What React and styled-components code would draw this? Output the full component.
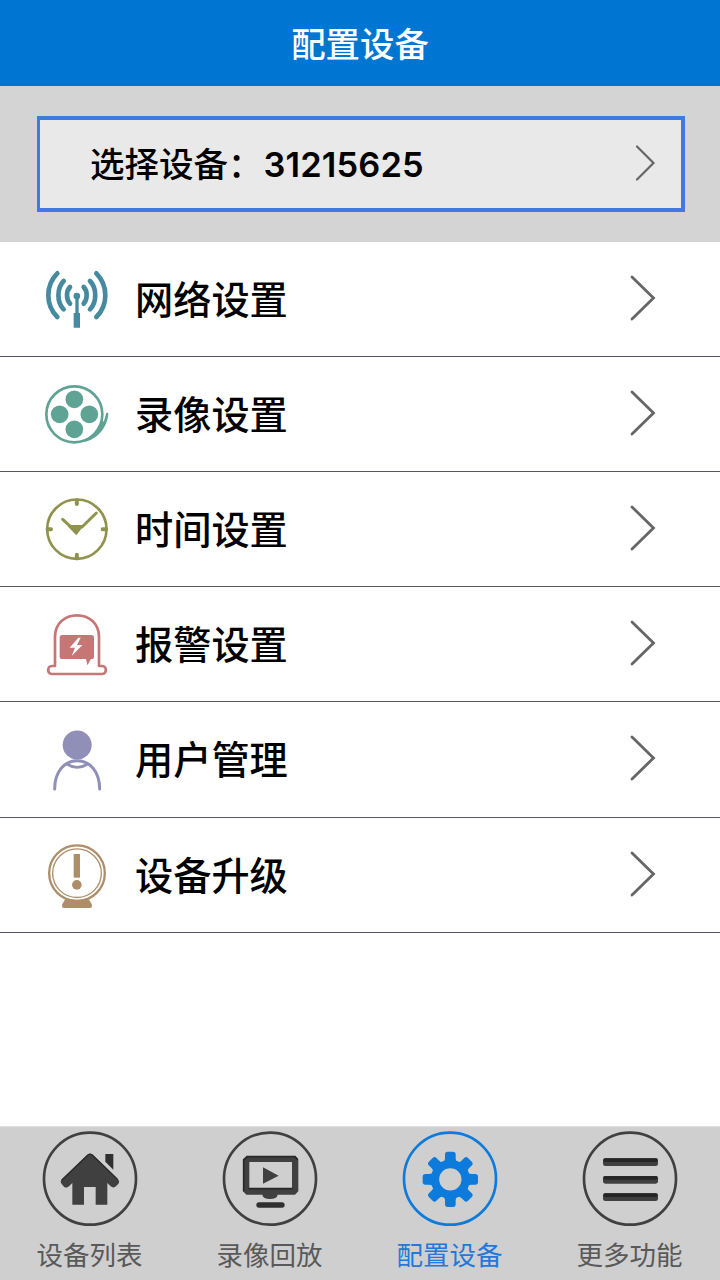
import React, { Fragment } from 'react';
import styled, { createGlobalStyle } from 'styled-components';

const GlobalStyle = createGlobalStyle`
  body {
    margin: 0;
    background: #ffffff;
    font-family: "Noto Sans CJK SC", sans-serif;
  }
`;

const Page = styled.div`
  display: flex;
  flex-direction: column;
  width: 720px;
  height: 1280px;
  overflow: hidden;
`;

const Header = styled.header`
  display: flex;
  align-items: center;
  justify-content: center;
  box-sizing: border-box;
  height: 86px;
  flex-shrink: 0;
  padding-bottom: 2px;
  background: #0076d3;
  color: #ffffff;
`;

const HeaderTitle = styled.h1`
  margin: 0;
  font-size: 34.4px;
  font-weight: 500;
  line-height: 50px;
`;

const DevicePanel = styled.section`
  box-sizing: border-box;
  height: 155.6px;
  flex-shrink: 0;
  padding: 30px 35px 0 37px;
  background: #d4d4d4;
`;

const DeviceButton = styled.button`
  display: flex;
  align-items: center;
  justify-content: space-between;
  box-sizing: border-box;
  width: 100%;
  height: 96px;
  padding: 0 25px 2px 50px;
  border: 4px solid #4079e2;
  border-left-width: 3px;
  background: #e9e9e9;
  color: #000000;
  font: 500 34.5px/50px "Noto Sans CJK SC", sans-serif;
`;

const DeviceNumber = styled.span`
  margin-left: 1px;
  font-family: Inter, sans-serif;
  font-size: 34.4px;
  font-weight: 600;
  letter-spacing: 0.15px;
`;

const MenuList = styled.ul`
  margin: 0;
  padding: 0;
  flex: 1;
  list-style: none;
`;

const MenuItem = styled.li`
  display: flex;
  align-items: center;
  box-sizing: border-box;
  height: 115.2px;
  padding: 0 63px 2px 40px;
  border-bottom: 1px solid #555a60;
`;

const MenuIcon = styled.svg`
  width: 72px;
  height: 72px;
  flex-shrink: 0;
  color: ${({ $color }) => $color};
`;

const MenuLabel = styled.span`
  flex: 1;
  margin-left: 23px;
  color: #000000;
  font-size: 38.2px;
  font-weight: 500;
  line-height: 56px;
`;

const Chevron = styled.svg`
  width: ${({ $width }) => $width}px;
  height: ${({ $height }) => $height}px;
  fill: none;
  stroke: #666666;
  stroke-width: ${({ $stroke }) => $stroke};
  stroke-linecap: round;
`;

const TabBar = styled.nav`
  display: grid;
  grid-template-columns: repeat(4, 180px);
  box-sizing: border-box;
  height: 154px;
  flex-shrink: 0;
  border-top: 1px solid #dedede;
  background: #cfcfcf;
`;

const Tab = styled.div`
  display: flex;
  flex-direction: column;
  align-items: center;
  padding-top: 2px;
  color: ${({ $active }) => ($active ? '#2478dc' : '#595959')};
`;

const TabIcon = styled.svg`
  width: 100px;
  height: 100px;
  flex-shrink: 0;
  color: ${({ $active }) => ($active ? '#0c7bdc' : '#404040')};
`;

const TabLabel = styled.span`
  margin-top: 5px;
  padding-right: 1px;
  font-size: 26.5px;
  line-height: 40px;
`;

const NetworkIcon = () => (
  <Fragment>
    <g fill="none" stroke="currentColor" strokeWidth="14" strokeLinecap="round">
      <path d="M82 55C46 91 46 150 82 186" />
      <path d="M101 78C80 99 80 142 101 163" />
      <path d="M120 96C108 108 108 133 120 146" />
      <path d="M199 55C235 91 235 150 199 186" />
      <path d="M180 78C201 99 201 142 180 163" />
      <path d="M161 96C173 108 173 133 161 146" />
    </g>
    <circle cx="140.500" cy="123" r="10" fill="currentColor" />
    <path d="M136 128h10v46h4v44h-19v-44h5z" fill="currentColor" />
  </Fragment>
);

const RecordIcon = () => (
  <Fragment>
    <circle cx="133" cy="133" r="84" fill="none" stroke="currentColor" strokeWidth="8" />
    <path
      d="M228 132Q228 128 231.500 128Q235 128 235 132C232 170 205 206 166 215L150 216C187 204 217 180 228 132z"
      fill="currentColor"
    />
    <path d="M217 150C208 180 190 202 150 216L184 208C203 194 213 178 221 156z" fill="currentColor" />
    <circle cx="133" cy="88" r="26.500" fill="currentColor" />
    <circle cx="133" cy="178" r="26.500" fill="currentColor" />
    <circle cx="89" cy="133" r="26.500" fill="currentColor" />
    <circle cx="178" cy="133" r="26.500" fill="currentColor" />
  </Fragment>
);

const TimeIcon = () => (
  <Fragment>
    <circle cx="140.500" cy="132.500" r="89" fill="none" stroke="currentColor" strokeWidth="8" />
    <g fill="none" stroke="currentColor" strokeLinecap="round">
      <path d="M140.500 46v11M140.500 209v11M53 133h10M218 133h10" strokeWidth="12" />
      <path d="M98 103L125 128M156 126L199 84" strokeWidth="9" />
    </g>
    <path d="M118 120H163L139 151L114 125z" fill="currentColor" />
  </Fragment>
);

const AlarmIcon = () => (
  <Fragment>
    <path
      d="M75 198V110C75 70 105 46 141 46S207 70 207 110V198H217C231 198 231 222 217 222H65C51 222 51 198 65 198z"
      fill="none"
      stroke="currentColor"
      strokeWidth="8"
      strokeLinejoin="round"
    />
    <path d="M97 105H184Q192 105 192 113V170Q192 177 184 177H183L172 196L168 177H97Q89 177 89 170V113Q89 105 97 105z" fill="currentColor" />
    <path d="M145 113L119 143H135L125 168L157 135H141L152 113z" fill="#ffffff" />
  </Fragment>
);

const UserIcon = () => (
  <Fragment>
    <circle cx="141.500" cy="90" r="43.500" fill="currentColor" />
    <path d="M74 222C74 170 103 137 141.500 137S209 170 209 222" fill="none" stroke="currentColor" strokeWidth="9" strokeLinecap="round" />
    <path d="M110 147Q141.500 167 173 147" fill="none" stroke="currentColor" strokeWidth="8" />
  </Fragment>
);

const UpgradeIcon = () => (
  <Fragment>
    <circle cx="141" cy="126.500" r="83.500" fill="none" stroke="currentColor" strokeWidth="7" />
    <circle cx="141" cy="126.500" r="73" fill="none" stroke="currentColor" strokeWidth="4" />
    <path d="M131 69H150V140H131z" fill="currentColor" />
    <circle cx="140.500" cy="161.500" r="14.500" fill="currentColor" />
    <path d="M108 201Q141 213 174 201L185 219Q188 231 180 231H102Q94 231 97 219z" fill="currentColor" />
  </Fragment>
);

const HomeIcon = () => (
  <Fragment>
    <path
      d="M261 135Q270 128 279 135L354 208Q361 215 354 223L346 230Q339 235 332 229L322 219V284H287V231H252V284H217V219L207 229Q199 236 192 230L185 222Q179 215 185 208z"
      fill="currentColor"
    />
    <path d="M316 132H340V179L316 155z" fill="#303030" />
    <path d="M186 210L264 135Q270 130 277 135L352 208" fill="none" stroke="#2b2b2b" strokeWidth="4" />
  </Fragment>
);

const PlaybackIcon = () => (
  <Fragment>
    <path
      d="M199 138H345L355 148V244L345 254H293Q291 267 270 267T247 254H199L189 244V148zM208 156V235H336V156z"
      fill="currentColor"
      fillRule="evenodd"
    />
    <path d="M199 140H345L353 149M201 142L191 150V244M206 236H338" fill="none" stroke="#282828" strokeWidth="5" />
    <path d="M249 172L296 197L249 221z" fill="currentColor" />
    <rect x="229" y="277" width="85" height="16" rx="8" fill="#303030" />
  </Fragment>
);

const teeth = [0, 45, 90, 135, 180, 225, 270, 315];

const GearIcon = () => (
  <Fragment>
    <circle cx="271" cy="208" r="46" fill="none" stroke="currentColor" strokeWidth="25" />
    {teeth.map((angle) => (
      <path
        key={angle}
        d="M250 156Q255 153 255 145V133Q255 125 263 125H279Q287 125 287 133V145Q287 153 292 156L287 168H255z"
        transform={`rotate(${angle} 271 208)`}
        fill="currentColor"
      />
    ))}
  </Fragment>
);

const MoreIcon = () => (
  <Fragment>
    {[145, 198, 250].map((y) => (
      <Fragment key={y}>
        <rect x="189" y={y} width="165" height="23" rx="7" fill="currentColor" />
        <rect x="190" y={y} width="163" height="11" rx="5" fill="#262626" />
      </Fragment>
    ))}
  </Fragment>
);

const menuItems = [
  { label: '网络设置', color: '#468a9f', Icon: NetworkIcon },
  { label: '录像设置', color: '#5fa394', Icon: RecordIcon },
  { label: '时间设置', color: '#90934d', Icon: TimeIcon },
  { label: '报警设置', color: '#c57675', Icon: AlarmIcon },
  { label: '用户管理', color: '#908fb8', Icon: UserIcon },
  { label: '设备升级', color: '#ae8e68', Icon: UpgradeIcon },
];

const tabs = [
  { label: '设备列表', Icon: HomeIcon },
  { label: '录像回放', Icon: PlaybackIcon },
  { label: '配置设备', Icon: GearIcon, active: true },
  { label: '更多功能', Icon: MoreIcon },
];

const App = () => (
  <Fragment>
    <GlobalStyle />
    <Page>
      <Header>
        <HeaderTitle>配置设备</HeaderTitle>
      </Header>
      <DevicePanel>
        <DeviceButton>
          <span>
            选择设备：<DeviceNumber>31215625</DeviceNumber>
          </span>
          <Chevron $width={22} $height={38} $stroke={2.2} viewBox="0 0 22 38">
            <path d="M3 2.500L19.500 19L3 35.500" />
          </Chevron>
        </DeviceButton>
      </DevicePanel>
      <MenuList>
        {menuItems.map(({ label, color, Icon }) => (
          <MenuItem key={label}>
            <MenuIcon viewBox="30 21 216 216" $color={color}>
              <Icon />
            </MenuIcon>
            <MenuLabel>{label}</MenuLabel>
            <Chevron $width={28} $height={48} $stroke={2.8} viewBox="0 0 28 48">
              <path d="M3 3L24.500 24L3 45" />
            </Chevron>
          </MenuItem>
        ))}
      </MenuList>
      <TabBar>
        {tabs.map(({ label, Icon, active }) => (
          <Tab key={label} $active={active}>
            <TabIcon viewBox="120 57 300 300" $active={active}>
              <circle cx="270" cy="206" r="138" fill="none" stroke="currentColor" strokeWidth="8" />
              <Icon />
            </TabIcon>
            <TabLabel>{label}</TabLabel>
          </Tab>
        ))}
      </TabBar>
    </Page>
  </Fragment>
);

export default App;
